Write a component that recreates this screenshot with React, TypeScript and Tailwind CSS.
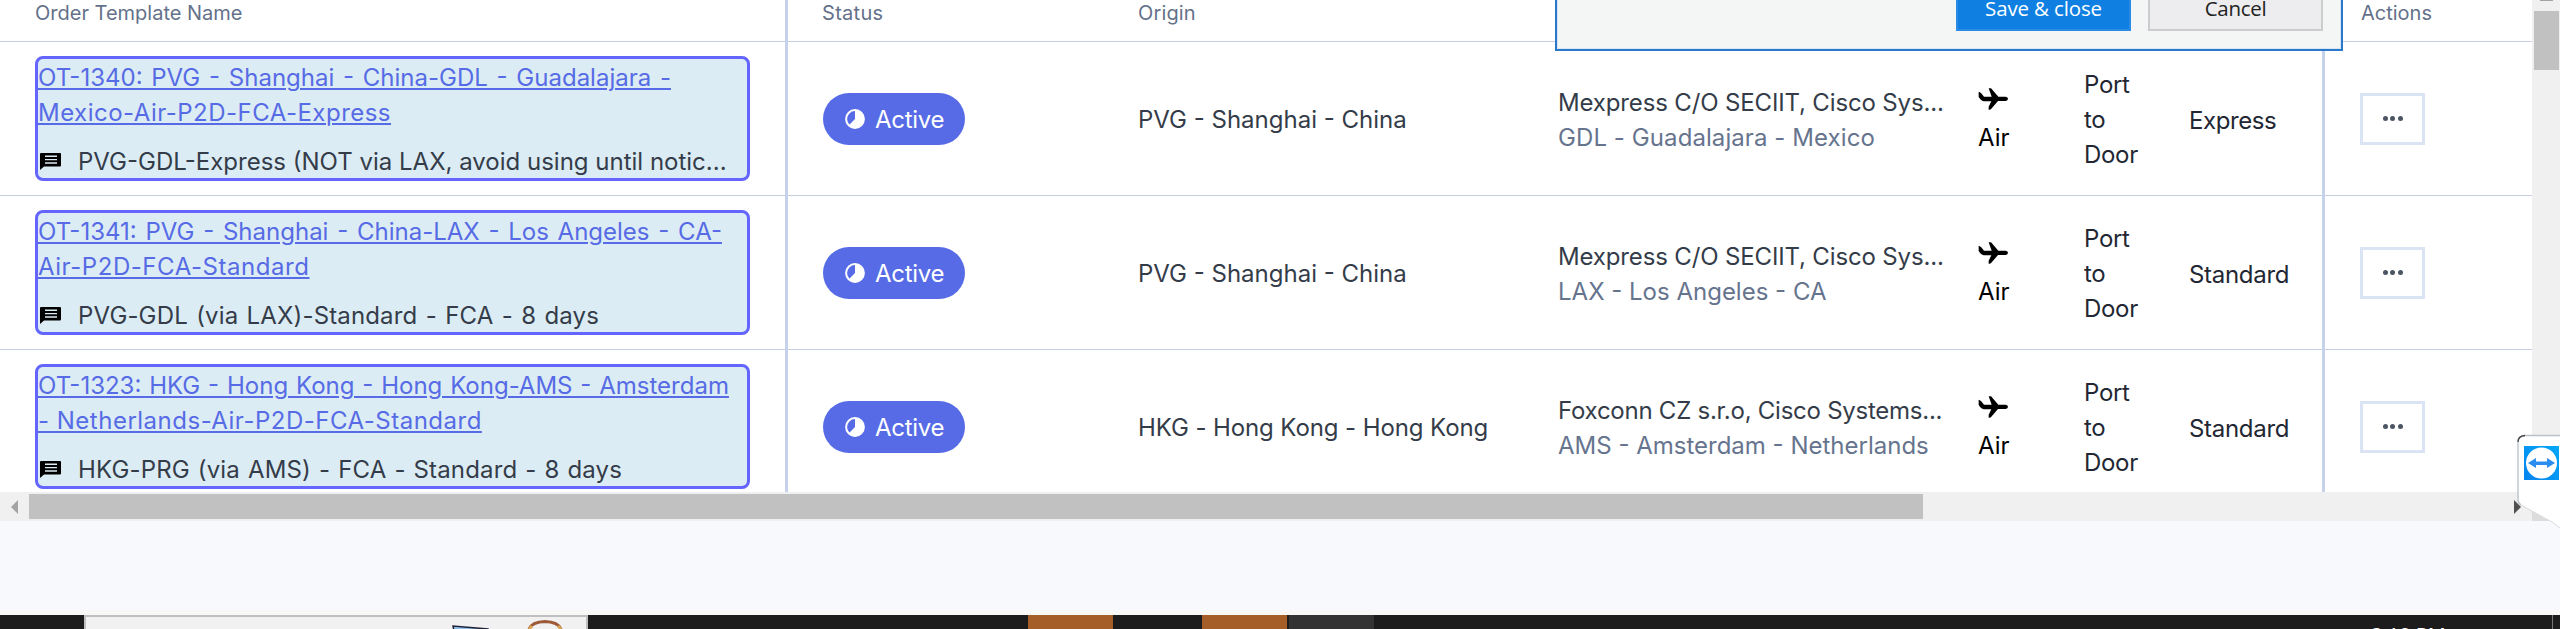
type Line = { text: string; fit: string };
type Order = {
  title: Line[];
  note: Line;
  origin: Line;
  company: Line;
  destination: Line;
  service: Line;
};

const orders: Order[] = [
  {
    title: [
      { text: "OT-1340: PVG - Shanghai - China-GDL - Guadalajara -", fit: "[word-spacing:2px]" },
      { text: "Mexico-Air-P2D-FCA-Express", fit: "tracking-[0.48px]" },
    ],
    note: { text: "PVG-GDL-Express (NOT via LAX, avoid using until notic...", fit: "" },
    origin: { text: "PVG - Shanghai - China", fit: "" },
    company: { text: "Mexpress C/O SECIIT, Cisco Sys...", fit: "tracking-[-0.15px]" },
    destination: { text: "GDL - Guadalajara - Mexico", fit: "tracking-[0.08px]" },
    service: { text: "Express", fit: "tracking-[-0.4px]" },
  },
  {
    title: [
      { text: "OT-1341: PVG - Shanghai - China-LAX - Los Angeles - CA-", fit: "[word-spacing:2px]" },
      { text: "Air-P2D-FCA-Standard", fit: "tracking-[0.55px]" },
    ],
    note: { text: "PVG-GDL (via LAX)-Standard - FCA - 8 days", fit: "tracking-[0.15px] [word-spacing:1.4px]" },
    origin: { text: "PVG - Shanghai - China", fit: "" },
    company: { text: "Mexpress C/O SECIIT, Cisco Sys...", fit: "tracking-[-0.15px]" },
    destination: { text: "LAX - Los Angeles - CA", fit: "" },
    service: { text: "Standard", fit: "tracking-[-0.3px]" },
  },
  {
    title: [
      { text: "OT-1323: HKG - Hong Kong - Hong Kong-AMS - Amsterdam", fit: "[word-spacing:1.1px]" },
      { text: "- Netherlands-Air-P2D-FCA-Standard", fit: "tracking-[0.5px]" },
    ],
    note: { text: "HKG-PRG (via AMS) - FCA - Standard - 8 days", fit: "tracking-[0.15px] [word-spacing:1.1px]" },
    origin: { text: "HKG - Hong Kong - Hong Kong", fit: "tracking-[-0.1px]" },
    company: { text: "Foxconn CZ s.r.o, Cisco Systems...", fit: "tracking-[-0.25px]" },
    destination: { text: "AMS - Amsterdam - Netherlands", fit: "" },
    service: { text: "Standard", fit: "tracking-[-0.3px]" },
  },
];

function NoteIcon() {
  return (
    <svg className="mt-[8px] ml-[2px] h-[17px] w-[21px] shrink-0" viewBox="0 0 21 17">
      <path d="M1 0H20Q21 0 21 1V12.5Q21 13.5 20 13.5H4L0 17V1Q0 0 1 0Z" fill="#000" />
      <path d="M5 3.2H17M5 6.6H17M5 10H17" stroke="#dcecf4" strokeWidth="1.4" />
    </svg>
  );
}

function ProgressIcon() {
  return (
    <svg className="h-[20px] w-[20px] shrink-0" viewBox="0 0 20 20">
      <circle cx="10" cy="10" r="8.9" fill="none" stroke="#fff" strokeWidth="2" />
      <path d="M10 1A9 9 0 1 1 3.6 16.4L10 10Z" fill="#fff" />
    </svg>
  );
}

function PlaneIcon() {
  return (
    <svg className="h-[22px] w-[30px]" viewBox="0 0 90 66">
      <path
        d="M2 11Q7 12 11 17L18 26H41L32 1H37Q40 1 43 5L61 26H83Q90 27 90 32.500Q90 38 83 39H60L40 62Q37 66 32 65V56L40 40H17Q11 39 7 34L2 27Z"
        fill="#000"
      />
    </svg>
  );
}

function OrderRow({ order }: { order: Order }) {
  return (
    <div className="flex h-[154px] shrink-0 border-b border-[#c6cfe2] text-[24px] leading-[35px] text-[#343c49]">
      <div className="-mb-px flex w-[788px] shrink-0 items-center border-r-[3px] border-[#c5d2ea] pb-px pl-[35px]">
        <div className="h-[125px] w-[715px] rounded-[8px] border-[3px] border-[#6464ff] bg-[#dcecf4] pt-px">
          {order.title.map((line) => (
            <div key={line.text} className="h-[35px] text-[#566be5]">
              <a className={`underline decoration-2 underline-offset-[2px] ${line.fit}`}>{line.text}</a>
            </div>
          ))}
          <div className="mt-[15px] flex leading-[33px]">
            <NoteIcon />
            <span className={`ml-[17px] ${order.note.fit}`}>{order.note.text}</span>
          </div>
        </div>
      </div>
      <div className="flex w-[350px] shrink-0 items-center pl-[35px]">
        <div className="flex h-[52px] w-[142px] items-center rounded-[26px] bg-[#566be5] pl-[22px] text-white">
          <ProgressIcon />
          <span className="ml-[10px] pt-[2px] tracking-[-0.3px]">Active</span>
        </div>
      </div>
      <div className="flex w-[420px] shrink-0 items-center pt-[2px]">
        <span className={order.origin.fit}>{order.origin.text}</span>
      </div>
      <div className="flex w-[420px] shrink-0 flex-col items-start justify-center pt-[2px]">
        <span className={order.company.fit}>{order.company.text}</span>
        <span className={`text-[#66748e] ${order.destination.fit}`}>{order.destination.text}</span>
      </div>
      <div className="flex w-[106px] shrink-0 flex-col pt-[46px] text-black">
        <PlaneIcon />
        <span className="mt-[10px]">Air</span>
      </div>
      <div className="flex w-[105px] shrink-0 flex-col justify-center pt-[2px] tracking-[-0.3px] text-[#222733]">
        <span>Port</span>
        <span>to</span>
        <span>Door</span>
      </div>
      <div className="-mb-px flex w-[136px] shrink-0 items-center border-r-[3px] border-[#c5d2ea] pt-[2px] text-[#222733]">
        <span className={order.service.fit}>{order.service.text}</span>
      </div>
      <div className="flex flex-1 items-center pl-[35px]">
        <div className="flex h-[52px] w-[65px] items-center justify-center gap-[2.500px] border-[3px] border-[#dbe4f5] pb-px">
          <i className="size-[5px] rounded-full bg-[#4b5563]" />
          <i className="size-[5px] rounded-full bg-[#4b5563]" />
          <i className="size-[5px] rounded-full bg-[#4b5563]" />
        </div>
      </div>
    </div>
  );
}

function SaveDialog() {
  return (
    <div className="absolute top-0 left-[1555px] flex h-[51px] w-[788px] justify-end border-x-2 border-b-2 border-[#2878cb] bg-[#f4f6f6] font-['Open_Sans',sans-serif] text-[20.500px] leading-[30px]">
      <div className="flex h-full w-full justify-end border-x border-b border-[#d9e6f2] pr-[17px]">
        <div className="h-[31px] w-[175px] border-2 border-t-0 border-[#2b8ce6] bg-[#0f7fe2] text-center text-white">
          <div className="-mt-[7px] tracking-[-0.15px]">Save &amp; close</div>
        </div>
        <div className="ml-[17px] h-[31px] w-[175px] border-2 border-t-0 border-[#cacccd] bg-[#ededef] text-center text-[#222]">
          <div className="-mt-[7px] tracking-[-0.3px]">Cancel</div>
        </div>
      </div>
    </div>
  );
}

function RemoteTab() {
  return (
    <svg className="absolute top-[434px] left-[2516px] h-[96px] w-[44px]" viewBox="0 0 44 96">
      <defs>
        <linearGradient id="tab" x1="1" y1="0" x2="0" y2="1">
          <stop offset="0" stopColor="#00a8f8" />
          <stop offset="1" stopColor="#0784ee" />
        </linearGradient>
      </defs>
      <path d="M44 1.500H9Q2 1.500 2 8V66Q2 69 5 71L44 93Z" fill="#fff" />
      <path d="M44 1.500H9Q2 1.500 2 8V66Q2 69 5 71" fill="none" stroke="#b9c0c7" strokeWidth="1.3" />
      <path d="M2 8Q2 2 9 1.500" fill="none" stroke="#444" strokeWidth="1.300" />
      <path d="M5 71L36 88L44 94" fill="none" stroke="#d5d9dd" />
      <rect x="8" y="12" width="35" height="34" fill="url(#tab)" />
      <circle cx="25.500" cy="29" r="15.500" fill="#fff" />
      <path d="M12 29L20 24V27.500H31V24L39 29L31 34V31H20V34Z" fill="#2a8def" />
    </svg>
  );
}

function Taskbar() {
  return (
    <div className="flex h-[14px] overflow-hidden bg-[#1c1c1c]">
      <div className="ml-[84px] flex h-[20px] w-[504px] shrink-0 border-2 border-[#bfbfbf] bg-[#f1f1f1]">
        <svg className="ml-[366px] h-[12px] w-[120px]" viewBox="0 0 120 12">
          <path d="M2 14L1 9L36 12V14Z" fill="#8fc0ea" stroke="#20243a" strokeWidth="1.500" />
          <path d="M77 12Q80 5 93 4.500Q106 5 109 12" fill="none" stroke="#9c5a38" strokeWidth="3" />
          <path d="M77 12L80 9M109 12L106 9" stroke="#d9a556" strokeWidth="3" />
        </svg>
      </div>
      <div className="ml-[440px] w-[85px] shrink-0 bg-[#a55e27]" />
      <div className="ml-[89px] w-[85px] shrink-0 bg-[#a55e27]" />
      <div className="ml-[2px] w-[85px] shrink-0 bg-[#333333]" />
      <div className="ml-[997px] w-[181px] shrink-0 pt-[6px] font-['Open_Sans',sans-serif] text-[20px] leading-[27px] text-white">
        3:10 PM
      </div>
      <div className="w-px shrink-0 bg-[#777]" />
    </div>
  );
}

export default function App() {
  return (
    <div className="relative flex h-[629px] w-[2560px] flex-col overflow-hidden bg-[#f8f9fd] font-['Inter',sans-serif] whitespace-nowrap">
      <div className="flex h-[492px] shrink-0">
        <div className="flex h-[492px] w-[2532px] shrink-0 flex-col overflow-hidden bg-white">
          <div className="flex h-[42px] shrink-0 border-b border-[#c6cfe2] text-[20px] leading-[26px] text-[#64718a]">
            <div className="-mb-px w-[788px] shrink-0 border-r-[3px] border-[#c5d2ea] pl-[35px]">Order Template Name</div>
            <div className="w-[350px] shrink-0 pl-[34px] tracking-[0.3px]">Status</div>
            <div className="w-[1187px] shrink-0 tracking-[0.15px]">Origin</div>
            <div className="pl-[36px]">Actions</div>
          </div>
          {orders.map((order) => (
            <OrderRow key={order.title[0].text} order={order} />
          ))}
        </div>
        <div className="flex w-[28px] flex-col bg-[#f0f0f0] pl-[2px]">
          <div className="ml-[6px] h-px w-[13px] bg-[#a3a3a3]" />
          <div className="mt-[10px] h-[59px] w-[25px] bg-[#c1c1c1]" />
        </div>
      </div>
      <div className="flex h-[29px] shrink-0 items-center bg-[#f0f0f0]">
        <svg className="ml-[11px] h-[14px] w-[7px]" viewBox="0 0 7 14">
          <path d="M7 0V14L0 7Z" fill="#a3a3a3" />
        </svg>
        <div className="ml-[11px] h-[25px] w-[1894px] bg-[#c1c1c1]" />
        <svg className="ml-[591px] h-[14px] w-[7px]" viewBox="0 0 7 14">
          <path d="M0 0V14L7 7Z" fill="#505050" />
        </svg>
        <div className="ml-[11px] h-[29px] w-[28px] bg-[#dcdcdc]" />
      </div>
      <div className="h-[89px] shrink-0" />
      <div className="h-[5px] shrink-0 bg-[#f8f8f7]" />
      <Taskbar />
      <SaveDialog />
      <RemoteTab />
    </div>
  );
}
